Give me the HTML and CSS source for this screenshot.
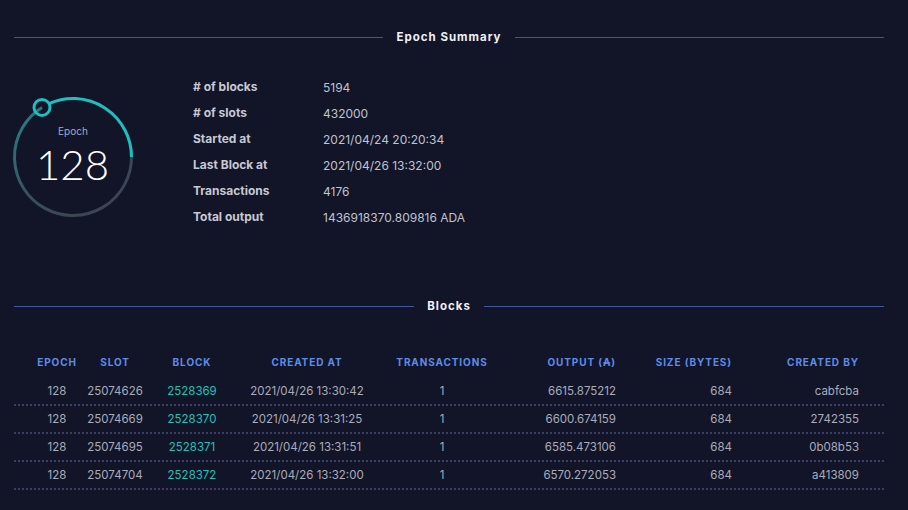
FILE: index.html
```html
<!DOCTYPE html>
<html>
<head>
<meta charset="utf-8">
<link rel="stylesheet" href="styles.css">
</head>
<body>
<div class="page">
  <div class="section-title summary-title"><span>Epoch Summary</span></div>
  <div class="summary">
    <div class="gauge">
      <svg class="ring" width="126" height="126" viewBox="0 0 126 126">
        <defs>
          <linearGradient id="track" gradientUnits="userSpaceOnUse" x1="100" y1="120" x2="20" y2="20">
            <stop offset="0" stop-color="#3d4250"/>
            <stop offset="0.5" stop-color="#37505a"/>
            <stop offset="1" stop-color="#2a7880"/>
          </linearGradient>
        </defs>
        <path d="M121.5 63 A58.5 58.5 0 1 1 32 13.4" fill="none" stroke="url(#track)" stroke-width="3"/>
        <path d="M39.2 9.6 A58.5 58.5 0 0 1 121.5 63" fill="none" stroke="#1fbfc0" stroke-width="3"/>
        <circle cx="32" cy="13.4" r="8" fill="none" stroke="#1fbfc0" stroke-width="3"/>
      </svg>
      <div class="gauge-text">
        <div class="gauge-label">Epoch</div>
        <div class="gauge-value">128</div>
      </div>
    </div>
    <dl class="info">
      <dt># of blocks</dt><dd>5194</dd>
      <dt># of slots</dt><dd>432000</dd>
      <dt>Started at</dt><dd>2021/04/24 20:20:34</dd>
      <dt>Last Block at</dt><dd>2021/04/26 13:32:00</dd>
      <dt>Transactions</dt><dd>4176</dd>
      <dt>Total output</dt><dd>1436918370.809816 ADA</dd>
    </dl>
  </div>
  <div class="section-title blocks-title"><span>Blocks</span></div>
  <div class="table">
    <div class="row head">
      <div class="c c1">Epoch</div>
      <div class="c c2">Slot</div>
      <div class="c c3">Block</div>
      <div class="c c4">Created at</div>
      <div class="c c5">Transactions</div>
      <div class="c c6">Output (₳)</div>
      <div class="c c7">Size (bytes)</div>
      <div class="c c8">Created by</div>
    </div>
    <div class="row">
      <div class="c c1">128</div><div class="c c2">25074626</div><div class="c c3 link">2528369</div><div class="c c4">2021/04/26 13:30:42</div><div class="c c5">1</div><div class="c c6">6615.875212</div><div class="c c7">684</div><div class="c c8">cabfcba</div>
    </div>
    <div class="row">
      <div class="c c1">128</div><div class="c c2">25074669</div><div class="c c3 link">2528370</div><div class="c c4">2021/04/26 13:31:25</div><div class="c c5">1</div><div class="c c6">6600.674159</div><div class="c c7">684</div><div class="c c8">2742355</div>
    </div>
    <div class="row">
      <div class="c c1">128</div><div class="c c2">25074695</div><div class="c c3 link">2528371</div><div class="c c4">2021/04/26 13:31:51</div><div class="c c5">1</div><div class="c c6">6585.473106</div><div class="c c7">684</div><div class="c c8">0b08b53</div>
    </div>
    <div class="row">
      <div class="c c1">128</div><div class="c c2">25074704</div><div class="c c3 link">2528372</div><div class="c c4">2021/04/26 13:32:00</div><div class="c c5">1</div><div class="c c6">6570.272053</div><div class="c c7">684</div><div class="c c8">a413809</div>
    </div>
  </div>
</div>
</body>
</html>
```

FILE: styles.css
```css
html, body {
  margin: 0;
  padding: 0;
  background: #121428;
}
body {
  font-family: Inter, "Noto Sans", sans-serif;
  color: #a9adbb;
  width: 908px;
  height: 510px;
  overflow: hidden;
}
.page {
  padding: 29px 24px 0 14px;
}
.section-title {
  display: flex;
  align-items: center;
  gap: 13px;
  height: 16px;
  font-size: 11.5px;
  font-weight: 700;
  letter-spacing: 1px;
  color: #eef1f8;
}
.section-title::before,
.section-title::after {
  content: "";
  flex: 1;
  height: 1px;
  background: #4d5573;
}
.blocks-title::before,
.blocks-title::after {
  background: #3e5a9c;
}
.summary {
  display: flex;
  height: 253px;
}
.gauge {
  position: relative;
  width: 126px;
  height: 126px;
  margin: 49px 0 0 -4px;
}
.ring {
  display: block;
}
.gauge-text {
  position: absolute;
  inset: 0;
  display: flex;
  flex-direction: column;
  align-items: center;
  padding-top: 31px;
}
.gauge-label {
  font-size: 10px;
  color: #a3abc9;
  line-height: 12px;
}
.gauge-value {
  font-family: Lato, sans-serif;
  font-weight: 300;
  font-size: 42px;
  color: #ffffff;
  line-height: 32px;
  margin-top: 11px;
  margin-left: -1px;
}
.info {
  display: grid;
  grid-template-columns: 130px auto;
  grid-auto-rows: 26px;
  margin: 35px 0 0 57px;
  font-size: 12px;
  line-height: 14px;
}
.info dt {
  font-weight: 700;
  color: #c6c9d4;
}
.info dd {
  margin: 0;
  color: #bfc3cf;
  padding-top: 1px;
}
.table {
  margin-top: 33px;
  font-size: 11.5px;
}
.row {
  display: grid;
  grid-template-columns: 66px 70px 84px 146px 124px 120px 116px 144px;
  height: 26px;
  align-items: center;
  border-bottom: 2px dotted #3b3f68;
}
.row.head {
  border-bottom: none;
  box-sizing: border-box;
  height: 31px;
  padding-bottom: 2px;
  font-size: 10px;
  font-weight: 700;
  letter-spacing: 0.9px;
  text-transform: uppercase;
  color: #5d8de8;
}
.c {
  text-align: center;
  white-space: nowrap;
}
.c1 { padding-left: 20px; }
.c6, .c7 { text-align: right; padding-right: 8px; }
.c8 { text-align: right; padding-right: 25px; }
.link { color: #22c1b7; }
```
